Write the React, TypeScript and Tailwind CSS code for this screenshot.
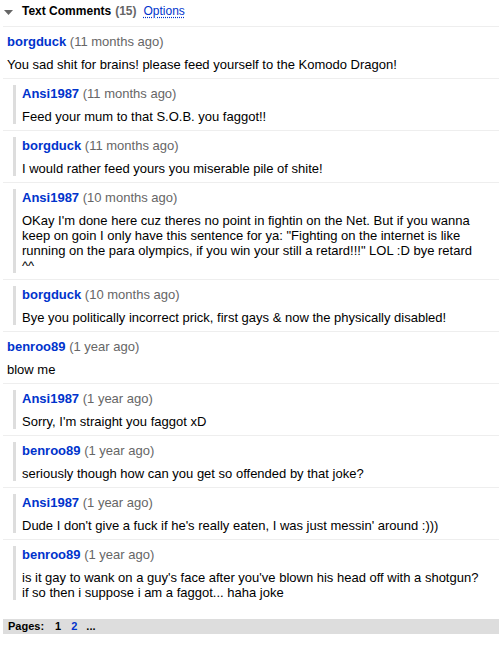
type Comment = {
  author: string;
  age: string;
  text: string[];
  reply?: boolean;
};

const comments: Comment[] = [
  {
    author: "borgduck",
    age: "11 months ago",
    text: ["You sad shit for brains! please feed yourself to the Komodo Dragon!"],
  },
  {
    author: "Ansi1987",
    age: "11 months ago",
    text: ["Feed your mum to that S.O.B. you faggot!!"],
    reply: true,
  },
  {
    author: "borgduck",
    age: "11 months ago",
    text: ["I would rather feed yours you miserable pile of shite!"],
    reply: true,
  },
  {
    author: "Ansi1987",
    age: "10 months ago",
    text: [
      "OKay I'm done here cuz theres no point in fightin on the Net. But if you wanna",
      'keep on goin I only have this sentence for ya: "Fighting on the internet is like',
      'running on the para olympics, if you win your still a retard!!!" LOL :D bye retard',
      "^^",
    ],
    reply: true,
  },
  {
    author: "borgduck",
    age: "10 months ago",
    text: ["Bye you politically incorrect prick, first gays & now the physically disabled!"],
    reply: true,
  },
  {
    author: "benroo89",
    age: "1 year ago",
    text: ["blow me"],
  },
  {
    author: "Ansi1987",
    age: "1 year ago",
    text: ["Sorry, I'm straight you faggot xD"],
    reply: true,
  },
  {
    author: "benroo89",
    age: "1 year ago",
    text: ["seriously though how can you get so offended by that joke?"],
    reply: true,
  },
  {
    author: "Ansi1987",
    age: "1 year ago",
    text: ["Dude I don't give a fuck if he's really eaten, I was just messin' around :)))"],
    reply: true,
  },
  {
    author: "benroo89",
    age: "1 year ago",
    text: [
      "is it gay to wank on a guy's face after you've blown his head off with a shotgun?",
      "if so then i suppose i am a faggot... haha joke",
    ],
    reply: true,
  },
];

function CommentBody({ c }: { c: Comment }) {
  return (
    <div>
      <div className="h-[17px] leading-[17px] whitespace-nowrap">
        <span className="font-bold text-[#0033cc]">{c.author}</span>
        <span className="text-[#666]"> ({c.age})</span>
      </div>
      <div className="mt-[7px] leading-[15px] text-black">
        {c.text.map((line, i) => (
          <div key={i} className="whitespace-nowrap">
            {line}
          </div>
        ))}
      </div>
    </div>
  );
}

export default function App() {
  return (
    <div
      className="w-[499px] h-[645px] bg-white text-[13px]"
      style={{ fontFamily: '"Liberation Sans", Arial, sans-serif' }}
    >
      <div className="h-[26px] flex items-center pl-[4px] pb-[4px] text-[12px]">
        <svg width="9" height="5" viewBox="0 0 9 5" className="mt-[2px]">
          <polygon points="0,0 9,0 4.5,5" fill="#666" />
        </svg>
        <span className="ml-[9px] font-bold text-black">Text Comments</span>
        <span className="ml-[4px] font-bold text-[#666]">(15)</span>
        <span className="ml-[7px] text-[#0033cc] underline decoration-dotted underline-offset-2">
          Options
        </span>
      </div>

      <div className="ml-[3px]">
        {comments.map((c, i) => (
          <div key={i} className="border-t border-[#eee] pt-[6px] pb-[6px]">
            {c.reply ? (
              <div className="ml-[10px] border-l-[3px] border-[#ddd] pl-[6px]">
                <CommentBody c={c} />
              </div>
            ) : (
              <div className="pl-[4px]">
                <CommentBody c={c} />
              </div>
            )}
          </div>
        ))}
      </div>

      <div className="ml-[3px] mt-[13px] h-[15px] bg-[#ddd] flex items-center pl-[5px] text-[11px] font-bold">
        <span>Pages:</span>
        <span className="ml-[11px]">1</span>
        <span className="ml-[10px] text-[#0033cc]">2</span>
        <span className="ml-[9px]">...</span>
      </div>
    </div>
  );
}
